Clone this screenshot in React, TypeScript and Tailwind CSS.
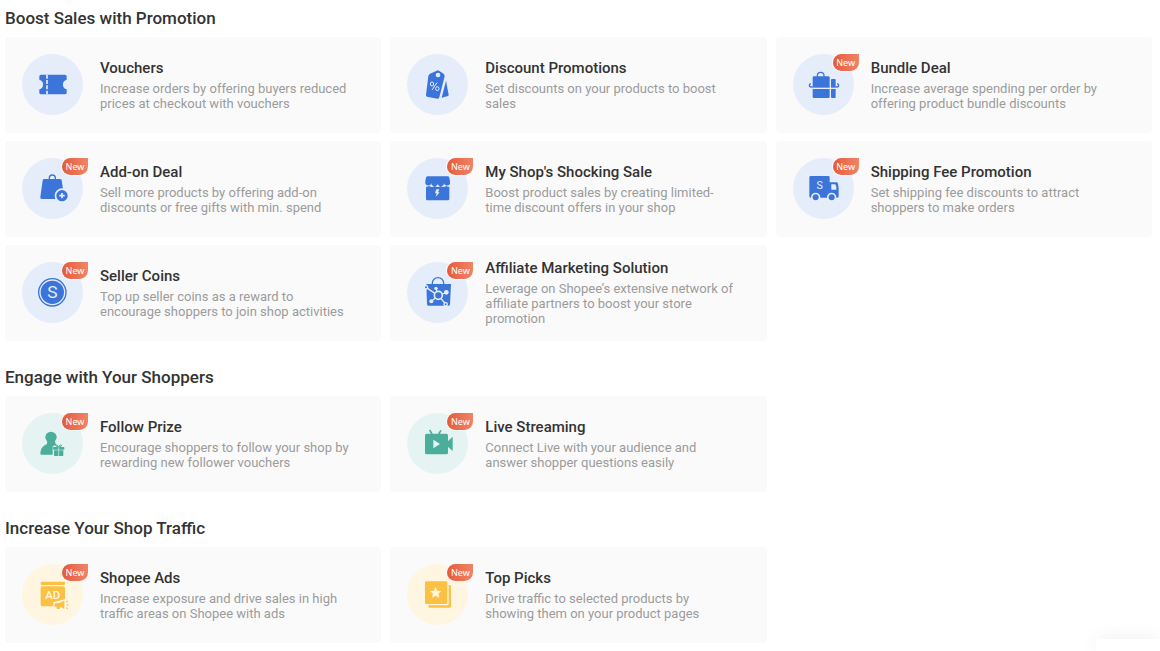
import type { ReactNode } from "react";

type Tone = "blue" | "green" | "yellow";

type Tool = {
  title: string;
  description: string;
  icon: ReactNode;
  isNew?: boolean;
};

type Section = {
  title: string;
  tone: Tone;
  tools: Tool[];
};

// Circle background + icon colour. Icons paint with currentColor and use
// --bg for anything that is cut out of the shape.
const TONES: Record<Tone, string> = {
  blue: "bg-[#e6edfa] text-[#3b75d9] [--bg:#e6edfa]",
  green: "bg-[#e5f4f3] text-[#4aae9b] [--bg:#e5f4f3]",
  yellow: "bg-[#fff6e1] text-[#fac144] [--bg:#fff6e1]",
};

const FONT = "Roboto, 'Liberation Sans', sans-serif";

function VoucherIcon() {
  return (
    <>
      <path d="M57 62H129q5 0 5 5v10a15 15 0 0 0 0 29v10q0 5-5 5H57q-5 0-5-5V106a15 15 0 0 0 0-29V67q0-5 5-5z" />
      <path d="M75 62V121" stroke="var(--bg)" strokeWidth="5" strokeDasharray="12 4" />
    </>
  );
}

function DiscountIcon() {
  return (
    <>
      <path d="M117 80L125 123q0 2-2 3L104 131z" />
      <path d="M69 59L89 50q4-2 7 0L110 59q3 3 3 8L97 130q-1 5-6 4L60 128q-4-1-3-5L64 66q1-5 5-7z" />
      <circle cx="93" cy="63" r="7" fill="var(--bg)" />
      <g fill="none" stroke="var(--bg)" strokeWidth="3">
        <ellipse cx="75" cy="90" rx="5" ry="6" />
        <ellipse cx="91" cy="104" rx="5" ry="6" />
        <path d="M90 86L75 108" />
      </g>
    </>
  );
}

function BundleIcon() {
  return (
    <>
      <path d="M73 68v-3a10 10 0 0 1 20 0v3" fill="none" stroke="currentColor" strokeWidth="4" />
      <rect x="59" y="67" width="51" height="65" rx="4" />
      <rect x="114" y="75" width="14" height="57" rx="3" />
      <path d="M58 103H130" stroke="var(--bg)" strokeWidth="4" />
      <path d="M59 99h-4q-6 0-6-5q0-4 5-5M128 99h3q6 0 6-5q0-4-5-5" fill="none" stroke="currentColor" strokeWidth="4" />
    </>
  );
}

function AddOnIcon() {
  return (
    <>
      <path d="M82 64v-4a9 9 0 0 1 18 0v4" fill="none" stroke="currentColor" strokeWidth="4" />
      <path d="M67 63H114q4 0 5 4L127 118q0 5-5 5H59q-5 0-4-5L62 67q1-4 5-4z" />
      <circle cx="120" cy="113" r="22" fill="var(--bg)" />
      <circle cx="120" cy="113" r="17" />
      <path d="M120 105v16M112 113h16" stroke="var(--bg)" strokeWidth="5" />
    </>
  );
}

function ShopIcon() {
  return (
    <>
      <path d="M62 55H122q4 0 5 4l2 10v4a9 8 0 0 1-18 3a9 8 0 0 1-19 0a9 8 0 0 1-19 0a9 8 0 0 1-18-3v-4l2-10q1-4 5-4z" />
      <path d="M57 86q5 1 9-2q9 6 17 0q9 6 18 0q9 6 17 0q4 3 9 2V123q0 4-4 4H61q-4 0-4-4z" />
      <path d="M88 94h9l-4 9h5L86 117l3-11h-5z" fill="var(--bg)" />
    </>
  );
}

function TruckIcon() {
  return (
    <>
      <path d="M53 54H106q4 0 4 4V73h20q4 0 5 4l2 13V115q0 4-4 4H53q-4 0-4-4V58q0-4 4-4z" />
      <path d="M115 79h12l3 8v8H115z" fill="var(--bg)" />
      <circle cx="68" cy="118" r="14" fill="var(--bg)" />
      <circle cx="116" cy="118" r="14" fill="var(--bg)" />
      <circle cx="68" cy="118" r="9" />
      <circle cx="116" cy="118" r="9" />
      <text x="80" y="94" fontSize="32" fontFamily={FONT} textAnchor="middle" fill="var(--bg)">
        S
      </text>
    </>
  );
}

function CoinIcon() {
  return (
    <>
      <circle cx="91" cy="91" r="41" fill="none" stroke="currentColor" strokeWidth="4" />
      <circle cx="91" cy="91" r="35" />
      <text x="91" y="109" fontSize="52" fontFamily={FONT} textAnchor="middle" fill="var(--bg)">
        S
      </text>
    </>
  );
}

function AffiliateIcon() {
  return (
    <>
      <path d="M76 68v-5a17 16 0 0 1 34 0v5" fill="none" stroke="currentColor" strokeWidth="4" />
      <path d="M58 66H132L129 127q0 4-4 4H64q-4 0-4-4z" />
      <g stroke="var(--bg)" strokeWidth="4">
        <path d="M58 77L84 94M87 79l3 10M106 96l12-5M73 118l12-10M102 110l14 16" />
        <circle cx="94" cy="100" r="12" fill="currentColor" strokeWidth="5" />
        <circle cx="57" cy="76" r="5" fill="currentColor" />
        <circle cx="116" cy="127" r="5" fill="currentColor" />
      </g>
      <g fill="var(--bg)">
        <circle cx="87" cy="79" r="5" />
        <circle cx="118" cy="91" r="7" />
        <circle cx="73" cy="118" r="6" />
      </g>
    </>
  );
}

function FollowIcon() {
  return (
    <>
      <circle cx="87" cy="73" r="17" />
      <path d="M76 84H98L103 97q-9 0-11 4V125H59q-5 0-4-5q1-19 20-27z" />
      <rect x="93" y="102" width="34" height="8" rx="2" />
      <rect x="96" y="112" width="28" height="17" rx="2" />
      <path d="M110 102q-9-1-9-5q3-5 9 4q6-9 9-4q0 4-9 5" fill="none" stroke="currentColor" strokeWidth="3" />
      <path d="M110 103v26" stroke="var(--bg)" strokeWidth="2" />
    </>
  );
}

function LiveIcon() {
  return (
    <>
      <path d="M68 51l7 12M102 52l-7 11" stroke="currentColor" strokeWidth="5" />
      <rect x="54" y="62" width="69" height="62" rx="5" />
      <path d="M121 86L137 71V114L121 100z" />
      <path d="M79 80L99 93L79 106z" fill="var(--bg)" />
    </>
  );
}

function AdsIcon() {
  return (
    <>
      <rect x="56" y="53" width="73" height="10" rx="4" />
      <rect x="56" y="67" width="73" height="60" rx="5" />
      <text x="92" y="106" fontSize="34" fontWeight="500" fontFamily={FONT} textAnchor="middle" fill="var(--bg)">
        AD
      </text>
      <path d="M94 115L130 105V137H102L94 129z" fill="var(--bg)" />
      <path d="M98 118L112 117L127 110V134L114 129L113 135H105L103 128H98z" />
      <path d="M132 114l6-3M133 123h7M132 131l6 3" stroke="currentColor" strokeWidth="3" />
    </>
  );
}

function TopPicksIcon() {
  return (
    <>
      <path d="M125 63h3q4 0 4 4V127q0 4-4 4H68q-4 0-4-4V124H121q4 0 4-4z" />
      <rect x="54" y="52" width="67" height="68" rx="4" />
      <path d="M86 69l5 11 12 1-9 8 3 12-11-6-11 6 3-12-9-8 12-1z" fill="var(--bg)" />
    </>
  );
}

const SECTIONS: Section[] = [
  {
    title: "Boost Sales with Promotion",
    tone: "blue",
    tools: [
      {
        title: "Vouchers",
        description: "Increase orders by offering buyers reduced prices at checkout with vouchers",
        icon: <VoucherIcon />,
      },
      {
        title: "Discount Promotions",
        description: "Set discounts on your products to boost sales",
        icon: <DiscountIcon />,
      },
      {
        title: "Bundle Deal",
        description: "Increase average spending per order by offering product bundle discounts",
        icon: <BundleIcon />,
        isNew: true,
      },
      {
        title: "Add-on Deal",
        description: "Sell more products by offering add-on discounts or free gifts with min. spend",
        icon: <AddOnIcon />,
        isNew: true,
      },
      {
        title: "My Shop's Shocking Sale",
        description: "Boost product sales by creating limited-time discount offers in your shop",
        icon: <ShopIcon />,
        isNew: true,
      },
      {
        title: "Shipping Fee Promotion",
        description: "Set shipping fee discounts to attract shoppers to make orders",
        icon: <TruckIcon />,
        isNew: true,
      },
      {
        title: "Seller Coins",
        description: "Top up seller coins as a reward to encourage shoppers to join shop activities",
        icon: <CoinIcon />,
        isNew: true,
      },
      {
        title: "Affiliate Marketing Solution",
        description: "Leverage on Shopee’s extensive network of affiliate partners to boost your store promotion",
        icon: <AffiliateIcon />,
        isNew: true,
      },
    ],
  },
  {
    title: "Engage with Your Shoppers",
    tone: "green",
    tools: [
      {
        title: "Follow Prize",
        description: "Encourage shoppers to follow your shop by rewarding new follower vouchers",
        icon: <FollowIcon />,
        isNew: true,
      },
      {
        title: "Live Streaming",
        description: "Connect Live with your audience and answer shopper questions easily",
        icon: <LiveIcon />,
        isNew: true,
      },
    ],
  },
  {
    title: "Increase Your Shop Traffic",
    tone: "yellow",
    tools: [
      {
        title: "Shopee Ads",
        description: "Increase exposure and drive sales in high traffic areas on Shopee with ads",
        icon: <AdsIcon />,
        isNew: true,
      },
      {
        title: "Top Picks",
        description: "Drive traffic to selected products by showing them on your product pages",
        icon: <TopPicksIcon />,
        isNew: true,
      },
    ],
  },
];

function ToolCard({ tool, tone }: { tool: Tool; tone: Tone }) {
  return (
    <a href="#" className="flex min-h-24 items-center gap-[17px] rounded-sm bg-[#fafafa] pr-7 pb-0.5 pl-[17px] hover:bg-neutral-100">
      <span className={`relative size-[61px] shrink-0 rounded-full ${TONES[tone]}`}>
        <svg viewBox="0 0 183 183" className="size-full" fill="currentColor" aria-hidden="true">
          {tool.icon}
        </svg>
        {tool.isNew && (
          <span className="absolute top-0 left-10 flex h-[17px] w-[26px] items-center justify-center rounded-full rounded-tr-sm bg-linear-to-r from-[#e35a3c] to-[#f08467] font-['Noto_Sans',sans-serif] text-[9px] leading-none text-white ring-1 ring-[#fafafa]">
            New
          </span>
        )}
      </span>
      <span className="min-w-0">
        <span className="block text-[15px] leading-5 font-medium text-[#333]">{tool.title}</span>
        <span className="mt-[3px] block text-[13px] leading-[15px] text-[#9c9c9c]">{tool.description}</span>
      </span>
    </a>
  );
}

export default function App() {
  return (
    <main className="space-y-6 bg-white pt-[6px] pr-2 pb-2 pl-[5px] font-[Roboto,'Liberation_Sans',sans-serif]">
      {SECTIONS.map((section) => (
        <section key={section.title}>
          <h2 className="mb-[7px] text-[17px] leading-6 font-medium text-[#333]">{section.title}</h2>
          <div className="grid grid-cols-3 gap-x-[9px] gap-y-2">
            {section.tools.map((tool) => (
              <ToolCard key={tool.title} tool={tool} tone={section.tone} />
            ))}
          </div>
        </section>
      ))}

      {/* top edge of the docked chat widget */}
      <div className="fixed right-0 bottom-0 h-3 w-16 rounded-tl-sm bg-white shadow-[0_0_20px_rgba(0,0,0,0.08)]" />
    </main>
  );
}
